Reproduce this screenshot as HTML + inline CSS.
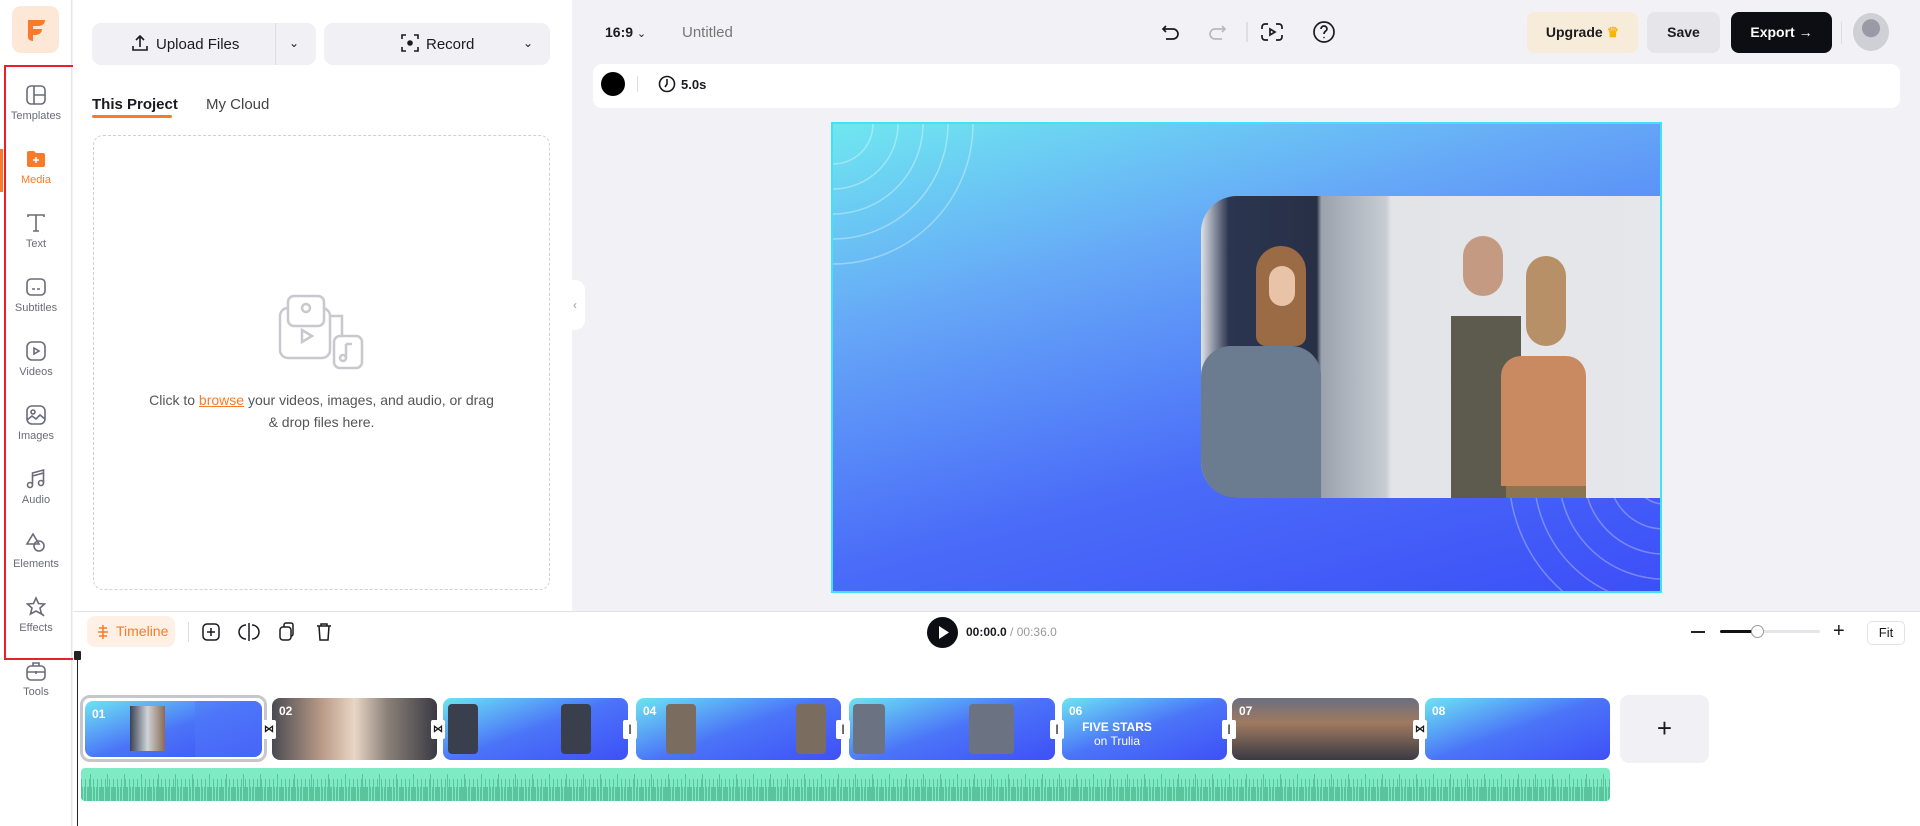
<!DOCTYPE html>
<html><head><meta charset="utf-8">
<style>
*{box-sizing:border-box;margin:0;padding:0}
body{width:1920px;height:826px;overflow:hidden;background:#f2f2f6;font-family:"Liberation Sans",sans-serif;position:relative;color:#1a1a1f}
.abs{position:absolute}
.side{left:0;top:0;width:72px;height:826px;background:#fff;border-right:1px solid #e6e6ea}
.logo{left:12px;top:6px;width:47px;height:47px;border-radius:9px;background:#fde8d8}
.item{position:absolute;left:0;width:72px;text-align:center;font-size:11px;color:#6b6b78}
.item svg{display:block;margin:0 auto 3px}
.panel{left:73px;top:0;width:499px;height:611px;background:#fff}
.btn{background:#f1f1f5;border-radius:9px;font-size:15px;color:#1a1a1f}
.canvas{left:831px;top:122px;width:831px;height:471px;border:2px solid #3fe3f7;background:linear-gradient(165deg,#6fe7f0 0%,#66a8f7 30%,#4a6cf8 65%,#3d4ff8 100%);overflow:hidden}
.tl{left:73px;top:611px;width:1847px;height:215px;background:#fff;border-top:1px solid #e2e2e8}
.clip{position:absolute;top:698px;height:62px;border-radius:8px;overflow:hidden;background:linear-gradient(160deg,#6de4f2,#4b74f8 50%,#3e50f7)}
.clip b{position:absolute;left:7px;top:6px;color:#fff;font-size:12px}
.tr{position:absolute;top:720px;width:14px;height:19px;background:#fff;border-radius:2px;font-size:10px;text-align:center;line-height:19px;font-weight:bold}
</style></head><body>

<div class="abs side"></div>
<div class="abs logo"><svg width="47" height="47" viewBox="0 0 47 47"><path d="M16 14h17c0 4-3 6-7 6h-5v3h9c0 4-3 6-7 6h-2v6c0 0-5 0-5-4z" fill="#f97a2a"/></svg></div>
<div class="abs" style="left:4px;top:65px;width:72px;height:595px;border:2px solid #e8202a"></div>
<div class="abs" style="left:0;top:149px;width:3px;height:43px;background:#f97a2a"></div>

<div class="item" style="top:83px"><svg width="24" height="24" viewBox="0 0 24 24" fill="none" stroke="#6b6b78" stroke-width="1.6"><rect x="3" y="3" width="18" height="18" rx="4"/><path d="M10 3v18M10 12h11"/></svg>Templates</div>
<div class="item" style="top:147px;color:#f97a2a"><svg width="24" height="24" viewBox="0 0 24 24"><path d="M3 6a2 2 0 012-2h5l2 2h7a2 2 0 012 2v10a2 2 0 01-2 2H5a2 2 0 01-2-2z" fill="#f97a2a"/><path d="M12 10v6M9 13h6" stroke="#fff" stroke-width="1.6"/></svg>Media</div>
<div class="item" style="top:211px"><svg width="24" height="24" viewBox="0 0 24 24" fill="none" stroke="#6b6b78" stroke-width="1.6"><path d="M4 6V4h16v2M12 4v16M9 20h6"/></svg>Text</div>
<div class="item" style="top:275px"><svg width="24" height="24" viewBox="0 0 24 24" fill="none" stroke="#6b6b78" stroke-width="1.6"><rect x="3" y="4" width="18" height="16" rx="4"/><path d="M8 14h3M13 14h3"/></svg>Subtitles</div>
<div class="item" style="top:339px"><svg width="24" height="24" viewBox="0 0 24 24" fill="none" stroke="#6b6b78" stroke-width="1.6"><rect x="3" y="3" width="18" height="18" rx="5"/><path d="M10 9l5 3-5 3z"/></svg>Videos</div>
<div class="item" style="top:403px"><svg width="24" height="24" viewBox="0 0 24 24" fill="none" stroke="#6b6b78" stroke-width="1.6"><rect x="3" y="3" width="18" height="18" rx="5"/><circle cx="9" cy="9" r="2"/><path d="M3 17l5-4 4 3 4-4 5 4"/></svg>Images</div>
<div class="item" style="top:467px"><svg width="24" height="24" viewBox="0 0 24 24" fill="none" stroke="#6b6b78" stroke-width="1.6"><circle cx="6" cy="18" r="2.5"/><circle cx="17" cy="16" r="2.5"/><path d="M8.5 18V6l11-3v13M8.5 9l11-3"/></svg>Audio</div>
<div class="item" style="top:531px"><svg width="24" height="24" viewBox="0 0 24 24" fill="none" stroke="#6b6b78" stroke-width="1.6"><path d="M9 3l-6 10h12z"/><circle cx="15" cy="15" r="5"/></svg>Elements</div>
<div class="item" style="top:595px"><svg width="24" height="24" viewBox="0 0 24 24" fill="none" stroke="#6b6b78" stroke-width="1.6"><path d="M12 3l2.5 5.5 6 .5-4.5 4 1.5 6-5.5-3-5.5 3 1.5-6-4.5-4 6-.5z"/><path d="M18 19l2 2"/></svg>Effects</div>
<div class="item" style="top:659px"><svg width="24" height="24" viewBox="0 0 24 24" fill="none" stroke="#6b6b78" stroke-width="1.6"><rect x="3" y="7" width="18" height="14" rx="4"/><path d="M9 7V4h6v3M3 13h18M12 12v3"/></svg>Tools</div>

<div class="abs panel"></div>
<div class="abs btn" style="left:92px;top:23px;width:224px;height:42px"></div>
<div class="abs" style="left:275px;top:23px;width:1px;height:42px;background:#dcdce2"></div>
<div class="abs" style="left:130px;top:33px;font-size:15px"><svg width="20" height="20" viewBox="0 0 20 20" fill="none" stroke="#1a1a1f" stroke-width="1.6" style="vertical-align:-4px;margin-right:6px"><path d="M10 14V3M6 7l4-4 4 4M3 13v4h14v-4"/></svg>Upload Files</div>
<div class="abs" style="left:289px;top:36px;font-size:12px">&#8964;</div>
<div class="abs btn" style="left:324px;top:23px;width:226px;height:42px"></div>
<div class="abs" style="left:400px;top:33px;font-size:15px"><svg width="20" height="20" viewBox="0 0 20 20" fill="none" stroke="#1a1a1f" stroke-width="1.6" style="vertical-align:-4px;margin-right:6px"><path d="M2 6V2h4M14 2h4v4M18 14v4h-4M6 18H2v-4"/><circle cx="10" cy="10" r="2" fill="#1a1a1f"/></svg>Record</div>
<div class="abs" style="left:523px;top:36px;font-size:12px">&#8964;</div>
<div class="abs" style="left:92px;top:96px;font-size:15px;font-weight:bold">This Project</div>
<div class="abs" style="left:92px;top:115px;width:80px;height:3px;border-radius:2px;background:#f97a2a"></div>
<div class="abs" style="left:206px;top:96px;font-size:15px;color:#444">My Cloud</div>
<div class="abs" style="left:93px;top:135px;width:457px;height:455px;border:1.5px dashed #d0d0d6;border-radius:10px"></div>
<svg class="abs" style="left:276px;top:292px" width="92" height="80" viewBox="0 0 92 80" fill="none" stroke="#c8c8cf" stroke-width="2.5"><rect x="4" y="16" width="50" height="50" rx="8"/><rect x="12" y="4" width="36" height="30" rx="6" fill="#fff"/><circle cx="30" cy="16" r="4"/><path d="M26 38l10 6-10 6z"/><path d="M54 24h12v20" /><rect x="58" y="44" width="28" height="32" rx="6" fill="#fff"/><path d="M70 52v14M70 52h6"/><circle cx="67" cy="66" r="3"/></svg>
<div class="abs" style="left:93px;top:389px;width:457px;text-align:center;font-size:14px;color:#555;line-height:22px">Click to <span style="color:#f97a2a;text-decoration:underline">browse</span> your videos, images, and audio, or drag<br>&amp; drop files here.</div>
<div class="abs" style="left:565px;top:280px;width:20px;height:50px;background:#fff;border-radius:0 10px 10px 0;font-size:12px;color:#999;line-height:50px;text-align:center">&#8249;</div>

<!-- top bar -->
<div class="abs" style="left:605px;top:24px;font-size:14px;font-weight:bold">16:9 <span style="font-weight:normal;font-size:11px">&#8964;</span></div>
<div class="abs" style="left:682px;top:24px;font-size:15px;color:#777">Untitled</div>
<svg class="abs" style="left:1160px;top:20px" width="180" height="24" viewBox="0 0 180 24" fill="none" stroke-width="1.7"><path d="M6 6L3 9l3 3M3 9h10a5 5 0 010 10H6" stroke="#1a1a1f"/><path d="M62 6l3 3-3 3M65 9H55a5 5 0 000 10h7" stroke="#b8b8c0"/><path d="M87 2v20" stroke="#ccc" stroke-width="1"/><path d="M108 4h-3a3 3 0 00-3 3v2M102 15v2a3 3 0 003 3h3M116 4h3a3 3 0 013 3v2M122 15v2a3 3 0 01-3 3h-3" stroke="#1a1a1f"/><path d="M110 9l5 3-5 3z" stroke="#1a1a1f"/><circle cx="164" cy="12" r="10" stroke="#1a1a1f"/><path d="M161 9a3 3 0 116 0c0 2-3 2-3 5" stroke="#1a1a1f"/><circle cx="164" cy="17.5" r=".8" fill="#1a1a1f"/></svg>
<div class="abs" style="left:1527px;top:12px;width:111px;height:41px;border-radius:8px;background:#f7ecd9;font-size:14px;font-weight:bold;line-height:41px;text-align:center">Upgrade <span style="color:#f7b500">&#9819;</span></div>
<div class="abs" style="left:1647px;top:12px;width:73px;height:41px;border-radius:8px;background:#e5e5ea;font-size:14px;font-weight:bold;line-height:41px;text-align:center">Save</div>
<div class="abs" style="left:1731px;top:12px;width:101px;height:41px;border-radius:8px;background:#0d0d14;color:#fff;font-size:14px;font-weight:bold;line-height:41px;text-align:center">Export &#8594;</div>
<div class="abs" style="left:1841px;top:22px;width:1px;height:22px;background:#ddd"></div>
<div class="abs" style="left:1853px;top:13px;width:36px;height:38px;border-radius:50%;background:radial-gradient(circle at 50% 40%,#9a9aa6 0 30%,#cfcfd6 32%)"></div>

<div class="abs" style="left:593px;top:64px;width:1307px;height:44px;border-radius:9px;background:#fff"></div>
<div class="abs" style="left:601px;top:72px;width:24px;height:24px;border-radius:50%;background:#000"></div>
<div class="abs" style="left:637px;top:76px;width:1px;height:16px;background:#ddd"></div>
<svg class="abs" style="left:658px;top:75px" width="18" height="18" viewBox="0 0 18 18" fill="none" stroke="#1a1a1f" stroke-width="1.6"><circle cx="9" cy="9" r="7.5"/><path d="M9 4v5l-2 3"/></svg>
<div class="abs" style="left:681px;top:77px;font-size:13px;font-weight:bold">5.0s</div>

<!-- canvas -->
<div class="abs canvas">
<svg class="abs" style="left:0;top:0" width="150" height="150" fill="none" stroke="rgba(255,255,255,.35)" stroke-width="1.5"><circle cx="0" cy="0" r="40"/><circle cx="0" cy="0" r="65"/><circle cx="0" cy="0" r="90"/><circle cx="0" cy="0" r="115"/><circle cx="0" cy="0" r="140"/></svg>
<svg class="abs" style="left:580px;top:250px" width="251" height="221" fill="none" stroke="rgba(255,255,255,.3)" stroke-width="1.5"><circle cx="251" cy="100" r="30"/><circle cx="251" cy="100" r="55"/><circle cx="251" cy="100" r="80"/><circle cx="251" cy="100" r="105"/><circle cx="251" cy="100" r="130"/><circle cx="251" cy="100" r="155"/></svg>
<div class="abs" style="left:368px;top:72px;width:463px;height:302px;border-radius:36px 0 0 36px;overflow:hidden;background:linear-gradient(90deg,#dfe3e8 0,#2b3550 6%,#283046 25%,#9aa2ad 26%,#c8cdd4 40%,#e2e4e8 41%,#e6e7ea 100%)">
 <div class="abs" style="left:0;top:150px;width:120px;height:160px;background:#6b7c90;border-radius:30px 30px 0 0"></div>
 <div class="abs" style="left:55px;top:50px;width:50px;height:100px;background:#9b6b45;border-radius:25px 25px 10px 10px"></div>
 <div class="abs" style="left:68px;top:70px;width:26px;height:40px;background:#e9c3a8;border-radius:13px"></div>
 <div class="abs" style="left:250px;top:120px;width:70px;height:190px;background:#5d5a4e"></div>
 <div class="abs" style="left:262px;top:40px;width:40px;height:60px;background:#c49b82;border-radius:20px"></div>
 <div class="abs" style="left:300px;top:160px;width:85px;height:130px;background:#c98a62;border-radius:20px 20px 0 0"></div>
 <div class="abs" style="left:305px;top:290px;width:80px;height:20px;background:#8c7550"></div>
 <div class="abs" style="left:325px;top:60px;width:40px;height:90px;background:#b89068;border-radius:20px"></div>
</div>
</div>

<!-- timeline -->
<div class="abs tl"></div>
<div class="abs" style="left:87px;top:616px;width:88px;height:31px;border-radius:8px;background:#fff0e6;color:#f97a2a;font-size:14px;line-height:31px;padding-left:29px">Timeline</div>
<svg class="abs" style="left:96px;top:624px" width="14" height="16" viewBox="0 0 14 16" fill="none" stroke="#f97a2a" stroke-width="1.5"><path d="M7 1v14M3 4h8M2 8h10M3 12h8"/></svg>
<div class="abs" style="left:188px;top:622px;width:1px;height:20px;background:#ddd"></div>
<svg class="abs" style="left:200px;top:621px" width="140" height="22" viewBox="0 0 140 22" fill="none" stroke="#1a1a1f" stroke-width="1.5"><rect x="3" y="3" width="16" height="16" rx="4"/><path d="M11 7v8M7 11h8"/><path d="M46 4a7 7 0 000 14M52 4a7 7 0 010 14M49 2v18"/><rect x="80" y="6" width="11" height="13" rx="3"/><path d="M84 6V4a2 2 0 012-2h5a2 2 0 012 2v9a2 2 0 01-2 2h-0"/><path d="M117 5h14M121 5V3h6v2M119 5l1 14h8l1-14"/></svg>
<div class="abs" style="left:927px;top:617px;width:31px;height:31px;border-radius:50%;background:#0d0d14"></div>
<svg class="abs" style="left:938px;top:625px" width="12" height="15"><path d="M1 1l10 6.5L1 14z" fill="#fff"/></svg>
<div class="abs" style="left:966px;top:625px;font-size:12px;font-weight:bold">00:00.0 <span style="font-weight:normal;color:#999">/ 00:36.0</span></div>
<div class="abs" style="left:1691px;top:631px;width:14px;height:1.5px;background:#222"></div>
<div class="abs" style="left:1720px;top:630px;width:100px;height:3px;background:#e5e5ea;border-radius:2px"></div>
<div class="abs" style="left:1720px;top:630px;width:37px;height:3px;background:#111;border-radius:2px"></div>
<div class="abs" style="left:1751px;top:625px;width:13px;height:13px;border-radius:50%;background:#fff;border:1.5px solid #999"></div>
<div class="abs" style="left:1833px;top:620px;font-size:20px;font-weight:300">+</div>
<div class="abs" style="left:1867px;top:621px;width:38px;height:24px;border:1px solid #e2e2e8;border-radius:5px;font-size:13px;text-align:center;line-height:22px">Fit</div>

<div class="abs" style="left:77px;top:653px;width:1px;height:173px;background:#222"></div>
<div class="abs" style="left:74px;top:651px;width:7px;height:9px;background:#222;border-radius:1px"></div>

<div class="abs" style="left:80px;top:695px;width:187px;height:67px;border:3px solid #c5c7cc;border-radius:10px"></div>
<div class="clip" style="left:85px;top:701px;width:177px;height:56px"><b>01</b><div class="abs" style="left:45px;top:5px;width:35px;height:45px;background:linear-gradient(90deg,#3a4352,#cfd3d8,#8a6a55)"></div><div class="abs" style="left:110px;top:0;width:67px;height:56px;background:rgba(80,120,250,.5)"></div></div>
<div class="clip" style="left:272px;width:165px;background:linear-gradient(90deg,#4a4a52,#b89a86 30%,#e9d6c5 50%,#8a8078 70%,#3a3a44)"><b>02</b></div>
<div class="clip" style="left:443px;width:185px"><b>03</b><div class="abs" style="left:5px;top:6px;width:30px;height:50px;background:#3a3f4e;border-radius:4px"></div><div class="abs" style="left:118px;top:6px;width:30px;height:50px;background:#3a3f4e;border-radius:4px"></div></div>
<div class="clip" style="left:636px;width:205px"><b>04</b><div class="abs" style="left:30px;top:6px;width:30px;height:50px;background:#7a6d60;border-radius:4px"></div><div class="abs" style="left:160px;top:6px;width:30px;height:50px;background:#7a6d60;border-radius:4px"></div></div>
<div class="clip" style="left:849px;width:206px"><b>05</b><div class="abs" style="left:4px;top:6px;width:32px;height:50px;background:#6b7382;border-radius:4px"></div><div class="abs" style="left:120px;top:6px;width:45px;height:50px;background:#6b7382;border-radius:4px"></div></div>
<div class="clip" style="left:1062px;width:165px"><b>06</b><div class="abs" style="left:0;top:22px;width:110px;text-align:center;color:#fff;font-size:12px;font-weight:bold">FIVE STARS<br><span style="font-weight:normal">on Trulia</span></div></div>
<div class="clip" style="left:1232px;width:187px;background:linear-gradient(180deg,#6b6f80,#a07a60 40%,#3a3a44)"><b>07</b></div>
<div class="clip" style="left:1425px;width:185px"><b>08</b></div>
<div class="tr" style="left:262px">⋈</div><div class="tr" style="left:431px">⋈</div><div class="tr" style="left:623px">|</div><div class="tr" style="left:836px">|</div><div class="tr" style="left:1050px">|</div><div class="tr" style="left:1222px">|</div><div class="tr" style="left:1413px">⋈</div>
<div class="abs" style="left:1620px;top:695px;width:89px;height:68px;border-radius:9px;background:#f1f1f5;font-size:26px;text-align:center;line-height:66px;font-weight:300">+</div>

<div class="abs" style="left:81px;top:768px;width:1529px;height:33px;border-radius:4px;background:#7eebc5;overflow:hidden">
<div class="abs" style="left:0;bottom:0;width:100%;height:22px;background:repeating-linear-gradient(90deg,#5cc49c 0 1px,transparent 1px 4px)"></div>
<div class="abs" style="left:0;bottom:0;width:100%;height:14px;background:repeating-linear-gradient(90deg,#5cc49c 0 2px,transparent 2px 3px)"></div>
<div class="abs" style="left:0;bottom:0;width:100%;height:27px;background:repeating-linear-gradient(90deg,transparent 0 9px,#5cc49c 9px 10px,transparent 10px 17px)"></div>
</div>
</body></html>
